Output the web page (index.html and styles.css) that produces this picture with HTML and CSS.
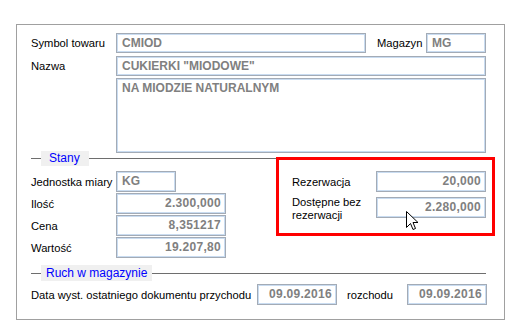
FILE: index.html
```html
<!DOCTYPE html>
<html lang="pl">

<head>
    <meta charset="UTF-8">
    <meta name="viewport" content="width=device-width, initial-scale=1.0">
    <title>Kartoteka towaru</title>
    <link rel="stylesheet" href="styles.css">
</head>

<body>
    <div class="panel">
        <div class="row">
            <span class="label">Symbol towaru</span>
            <div class="field w-symbol">CMIOD</div>
            <span class="label label-mag">Magazyn</span>
            <div class="field w-mag">MG</div>
        </div>
        <div class="row row-nazwa">
            <span class="label">Nazwa</span>
            <div class="field w-full">CUKIERKI "MIODOWE"</div>
        </div>
        <div class="row row-opis">
            <span class="label"></span>
            <div class="field field-area w-full">NA MIODZIE NATURALNYM</div>
        </div>

        <div class="legend legend-stany"><span>Stany</span></div>
        <div class="stany">
            <div class="col">
                <div class="row">
                    <span class="label">Jednostka miary</span>
                    <div class="field w-jm">KG</div>
                </div>
                <div class="row">
                    <span class="label">Ilość</span>
                    <div class="field field-num w-num">2.300,000</div>
                </div>
                <div class="row">
                    <span class="label">Cena</span>
                    <div class="field field-num w-num">8,351217</div>
                </div>
                <div class="row">
                    <span class="label">Wartość</span>
                    <div class="field field-num w-num">19.207,80</div>
                </div>
            </div>
            <div class="col col-right">
                <div class="row">
                    <span class="label label-r">Rezerwacja</span>
                    <div class="field field-num w-num">20,000</div>
                </div>
                <div class="row">
                    <span class="label label-r label-top">Dostępne bez rezerwacji</span>
                    <div class="field field-num w-num">2.280,000</div>
                </div>
            </div>
        </div>

        <div class="legend legend-ruch"><span>Ruch w magazynie</span></div>
        <div class="row row-data">
            <span class="label label-data">Data wyst. ostatniego dokumentu przychodu</span>
            <div class="field field-num w-date">09.09.2016</div>
            <span class="label label-rozchod">rozchodu</span>
            <div class="field field-num w-date">09.09.2016</div>
        </div>

        <div class="marker"></div>
        <svg class="cursor" width="13" height="21" viewBox="0 0 13 21">
            <path d="M0.5 0.5 L0.5 16.5 L4.5 12.5 L7 18.5 L9.5 17.5 L7 11.5 L12 11.5 Z" fill="#fff" stroke="#000" stroke-width="1" stroke-linejoin="miter"/>
        </svg>
    </div>
</body>

</html>
```

FILE: styles.css
```css
* {
    box-sizing: border-box;
}
body {
    margin: 0;
    padding: 24px 0 0 16px;
    background: #fff;
    font-family: "Liberation Sans", Arial, sans-serif;
    font-size: 11.2px;
    color: #000;
}
.panel {
    position: relative;
    width: 489px;
    height: 296px;
    padding: 8px 18px 0 14px;
    border: 1px solid #a0a0a0;
}
.row {
    display: flex;
    align-items: center;
}
.label {
    width: 85px;
    flex: none;
    white-space: nowrap;
}
.label-mag {
    width: 49px;
    margin-left: 11px;
}
.field {
    flex: none;
    height: 20px;
    line-height: 18px;
    padding: 0 4px 0 5px;
    border: 1px solid #a3abb6;
    box-shadow: inset 0 0 0 1px #c9dcf1;
    font-weight: bold;
    font-size: 12px;
    color: #808080;
    white-space: nowrap;
    overflow: hidden;
}
.field-num {
    text-align: right;
    letter-spacing: 0.3px;
}
.field-area {
    height: 75px;
}
.w-symbol { width: 250px; }
.w-mag { width: 60px; }
.w-full { width: 370px; }
.w-jm { width: 60px; }
.w-num { width: 110px; }
.w-date { width: 80px; }

.row-nazwa {
    margin-top: 3px;
}
.row-opis {
    margin-top: 2px;
    align-items: flex-start;
}

.legend {
    display: flex;
    align-items: center;
    height: 15px;
}
.legend::before,
.legend::after {
    content: "";
    height: 1px;
    background: #6e6e6e;
}
.legend::before {
    width: 10px;
}
.legend::after {
    flex: 1;
}
.legend span {
    height: 100%;
    line-height: 15px;
    background: #f0f0f0;
    color: #0000ff;
    font-size: 12px;
    padding: 0 5px;
}
.legend-stany {
    margin-top: -2px;
}
.legend-stany span {
    padding: 0 9px 0 8px;
}
.legend-ruch {
    margin-top: 7px;
    height: 16px;
}
.legend-ruch span {
    line-height: 16px;
}

.stany {
    display: flex;
    margin-top: 5px;
}
.col {
    display: flex;
    flex-direction: column;
    gap: 1px;
}
.col .field {
    height: 21px;
    line-height: 19px;
}
.col-right {
    margin-left: 66px;
}
.label-r {
    width: 84px;
}
.label-top {
    align-self: flex-start;
    white-space: normal;
    line-height: 13px;
    padding-top: 3px;
}

.row-data {
    margin-top: 3px;
}
.row-data .field {
    height: 21px;
    line-height: 19px;
}
.label-data {
    width: 226px;
}
.label-rozchod {
    width: 60px;
    margin-left: 10px;
}

.marker {
    position: absolute;
    left: 259px;
    top: 132px;
    width: 219px;
    height: 79px;
    border: 3px solid #ff0000;
}
.cursor {
    position: absolute;
    left: 389px;
    top: 186px;
}
```
